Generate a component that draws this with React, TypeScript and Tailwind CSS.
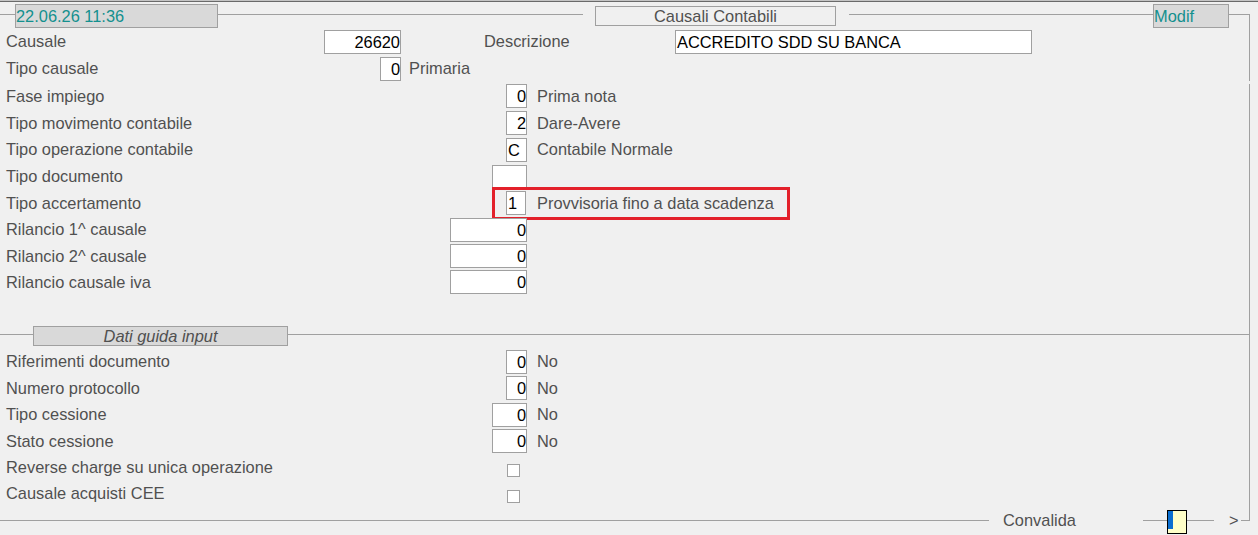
import React from "react";

const line = "h-px bg-[#a0a0a0]";

function Field({
  w,
  value,
  align = "right",
}: {
  w: string;
  value?: string;
  align?: "left" | "right";
}) {
  return (
    <div
      className={`${w} h-[24px] shrink-0 border border-[#a0a0a0] bg-white leading-[22px] text-black ${
        align === "right" ? "text-right" : "pl-px text-left"
      }`}
    >
      {value}
    </div>
  );
}

function Row({
  h,
  label,
  labelW,
  children,
}: {
  h: string;
  label: string;
  labelW: string;
  children?: React.ReactNode;
}) {
  return (
    <div className={`flex ${h} items-center`}>
      <div className={`${labelW} shrink-0 pl-[6px]`}>{label}</div>
      {children}
    </div>
  );
}

export default function App() {
  return (
    <div className="h-[535px] w-[1258px] overflow-hidden bg-[#f0f0f0] font-['Liberation_Sans',Arial,sans-serif] text-[16.4px] leading-none text-[#505050]">
      <div className="h-px bg-[#c4c4c4]" />
      <div className="h-px bg-[#6a6a6a]" />

      <div className="flex">
        <div className="flex w-[1249px] flex-col">
          {/* header */}
          <div className="flex h-[26px] items-start">
            <div className={`mt-[12px] w-[15px] ${line}`} />
            <div className="mt-[2px] h-[24px] w-[203px] border border-[#a0a0a0] bg-[#d9d9d9] leading-[22px] text-[#14908e]">
              22.06.26 11:36
            </div>
            <div className={`mt-[12px] w-[365px] ${line}`} />
            <div className="ml-[12px] mt-[4px] h-[20px] w-[241px] border border-[#a0a0a0] text-center leading-[18px]">
              Causali Contabili
            </div>
            <div className={`ml-[13px] mt-[12px] w-[304px] ${line}`} />
            <div className="mt-[2px] h-[24px] w-[76px] border border-[#a0a0a0] bg-[#d9d9d9] leading-[22px] text-[#14908e]">
              Modif
            </div>
            <div className={`mt-[12px] flex-1 ${line}`} />
          </div>

          {/* main fields */}
          <Row h="h-[27px]" label="Causale" labelW="w-[324px]">
            <Field w="w-[77px]" value="26620" />
            <div className="ml-[83px] w-[191px] shrink-0">Descrizione</div>
            <Field w="w-[357px]" value="ACCREDITO SDD SU BANCA" align="left" />
          </Row>
          <Row h="h-[27px]" label="Tipo causale" labelW="w-[380px]">
            <Field w="w-[21px]" value="0" />
            <div className="ml-[8px]">Primaria</div>
          </Row>
          <Row h="h-[28px]" label="Fase impiego" labelW="w-[506px]">
            <Field w="w-[21px]" value="0" />
            <div className="ml-[10px]">Prima nota</div>
          </Row>
          <Row h="h-[26px]" label="Tipo movimento contabile" labelW="w-[506px]">
            <Field w="w-[21px]" value="2" />
            <div className="ml-[10px]">Dare-Avere</div>
          </Row>
          <Row h="h-[27px]" label="Tipo operazione contabile" labelW="w-[506px]">
            <Field w="w-[21px]" value="C" align="left" />
            <div className="ml-[10px]">Contabile Normale</div>
          </Row>
          <Row h="h-[27px]" label="Tipo documento" labelW="w-[492px]">
            <Field w="w-[35px]" />
          </Row>
          <Row h="h-[26px]" label="Tipo accertamento" labelW="w-[492px]">
            <div className="flex h-[33px] w-[298px] shrink-0 items-center border-[3px] border-[#e3202a] pl-[11px]">
              <Field w="w-[20px]" value="1" align="left" />
              <div className="ml-[11px]">Provvisoria fino a data scadenza</div>
            </div>
          </Row>
          <Row h="h-[27px]" label="Rilancio 1^ causale" labelW="w-[450px]">
            <Field w="w-[77px]" value="0" />
          </Row>
          <Row h="h-[26px]" label="Rilancio 2^ causale" labelW="w-[450px]">
            <Field w="w-[77px]" value="0" />
          </Row>
          <Row h="h-[26px]" label="Rilancio causale iva" labelW="w-[450px]">
            <Field w="w-[77px]" value="0" />
          </Row>

          {/* section: dati guida input */}
          <div className="mt-[31px] flex h-[20px] items-start">
            <div className={`mt-[8px] w-[33px] ${line}`} />
            <div className="h-[20px] w-[255px] border border-[#a0a0a0] bg-[#d9d9d9] text-center italic leading-[18px]">
              Dati guida input
            </div>
            <div className={`mt-[8px] flex-1 ${line}`} />
          </div>

          <div className="mt-[2px]">
            <Row h="h-[27px]" label="Riferimenti documento" labelW="w-[506px]">
              <Field w="w-[21px]" value="0" />
              <div className="ml-[10px]">No</div>
            </Row>
            <Row h="h-[26px]" label="Numero protocollo" labelW="w-[506px]">
              <Field w="w-[21px]" value="0" />
              <div className="ml-[10px]">No</div>
            </Row>
            <Row h="h-[27px]" label="Tipo cessione" labelW="w-[492px]">
              <Field w="w-[35px]" value="0" />
              <div className="ml-[10px]">No</div>
            </Row>
            <Row h="h-[26px]" label="Stato cessione" labelW="w-[492px]">
              <Field w="w-[35px]" value="0" />
              <div className="ml-[10px]">No</div>
            </Row>
            <Row h="h-[26px]" label="Reverse charge su unica operazione" labelW="w-[507px]">
              <div className="mt-[6px] h-[13px] w-[13px] border border-[#a0a0a0] bg-white" />
            </Row>
            <Row h="h-[26px]" label="Causale acquisti CEE" labelW="w-[507px]">
              <div className="mt-[6px] h-[13px] w-[13px] border border-[#a0a0a0] bg-white" />
            </Row>
          </div>

          {/* footer */}
          <div className="flex h-[29px] items-start">
            <div className={`mt-[14px] w-[989px] ${line}`} />
            <div className="mt-[5px] w-[154px] pl-[14px] leading-[18px]">Convalida</div>
            <div className={`mt-[14px] w-[24px] ${line}`} />
            <div className="mt-[4px] flex h-[24px] w-[20px] border border-black bg-[#ffffc8]">
              <div className="h-[18px] w-[5px] bg-[#0b6fd0]" />
            </div>
            <div className={`mt-[14px] w-[27px] ${line}`} />
            <div className="mt-[5px] w-[27px] pl-[15px] leading-[18px]">&gt;</div>
            <div className={`mt-[14px] flex-1 ${line}`} />
          </div>
        </div>

        {/* right frame rail */}
        <div className="flex w-px flex-col">
          <div className="mt-[12px] h-[67px] w-px bg-[#a0a0a0]" />
          <div className="mt-[3px] h-[437px] w-px bg-[#a0a0a0]" />
        </div>
      </div>
    </div>
  );
}
